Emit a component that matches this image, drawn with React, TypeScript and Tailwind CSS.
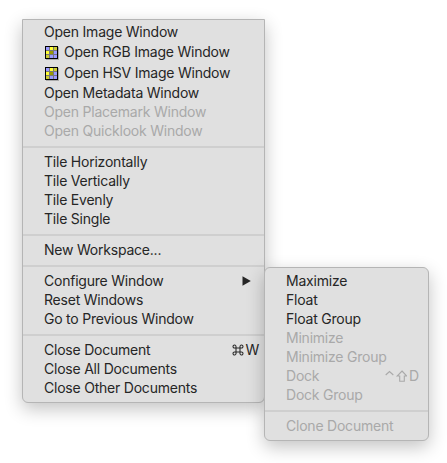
import React from "react";

type ItemProps = {
  label: string;
  disabled?: boolean;
  icon?: boolean;
  trailing?: React.ReactNode;
};

function GridIcon() {
  return (
    <svg className="mr-[4px] mt-[3px] h-4 w-4 shrink-0" viewBox="0 0 16 16" shapeRendering="crispEdges">
      <path d="M2 2h13v13H2z" fill="#aaa" />
      <path d="M1 1h13v13H1z" fill="#000" />
      <path d="M2 2h11v11H2z" fill="#77777a" />
      <path d="M2 2h3v3H2zM10 6h3v3h-3zM6 10h3v3H6zM10 10h3v3h-3z" fill="#9999ff" />
      <path d="M6 2h3v3H6zM2 6h3v3H2z" fill="#ffff33" />
      <path d="M10 2h3v3h-3zM2 10h3v3H2z" fill="#cccc33" />
      <path d="M6 6h3v3H6z" fill="#999900" />
    </svg>
  );
}

function Item({ label, disabled, icon, trailing }: ItemProps) {
  return (
    <div
      className={`flex items-center pl-[21px] ${icon ? "h-[21px] pb-[3px]" : "h-[19px] pb-[2px]"} ${
        disabled ? "text-[#a9a9a9]" : "text-[#262626]"
      }`}
    >
      {icon && <GridIcon />}
      <span>{label}</span>
      {trailing}
    </div>
  );
}

function Separator() {
  return (
    <div className="flex h-3 items-center">
      <div className="h-[2px] w-full bg-[#cfcfcf]" />
    </div>
  );
}

function CommandIcon() {
  return (
    <svg className="h-3 w-3" viewBox="0 0 12 12" fill="none" stroke="currentColor" strokeWidth="1.05">
      <path d="M4 4V2.6A1.5 1.5 0 1 0 2.5 4H9.5A1.5 1.5 0 1 0 8 2.6V9.4A1.5 1.5 0 1 0 9.5 8H2.5A1.5 1.5 0 1 0 4 9.4Z" />
    </svg>
  );
}

export default function App() {
  return (
    <div className="flex h-[463px] w-[447px] items-start overflow-hidden bg-white pl-[22px] pt-[19px] font-['Inter',sans-serif] text-[14px] leading-[19px] tracking-[-0.22px] whitespace-nowrap">
      <div className="h-[384px] w-[243px] shrink-0 rounded-b-[6px] border border-[#b5b5b5] bg-[#e0e0e0] pt-[3px] shadow-[0_6px_18px_rgba(0,0,0,0.24)]">
        <Item label="Open Image Window" />
        <Item label="Open RGB Image Window" icon />
        <Item label="Open HSV Image Window" icon />
        <Item label="Open Metadata Window" />
        <Item label="Open Placemark Window" disabled />
        <Item label="Open Quicklook Window" disabled />
        <Separator />
        <Item label="Tile Horizontally" />
        <Item label="Tile Vertically" />
        <Item label="Tile Evenly" />
        <Item label="Tile Single" />
        <Separator />
        <Item label="New Workspace..." />
        <Separator />
        <Item
          label="Configure Window"
          trailing={
            <svg className="mr-[13px] ml-auto h-[10px] w-[9px]" viewBox="0 0 9 10">
              <path d="M0.5 0.3L8.8 5L0.5 9.7Z" fill="currentColor" />
            </svg>
          }
        />
        <Item label="Reset Windows" />
        <Item label="Go to Previous Window" />
        <Separator />
        <Item
          label="Close Document"
          trailing={
            <span className="mr-[5px] ml-auto flex items-center gap-px">
              <CommandIcon />
              <span>W</span>
            </span>
          }
        />
        <Item label="Close All Documents" />
        <Item label="Close Other Documents" />
      </div>
      <div className="z-10 mt-[248px] -ml-px h-[174px] w-[165px] shrink-0 rounded-[6px] border border-[#b5b5b5] bg-[#e0e0e0] pt-[4px] shadow-[0_6px_18px_rgba(0,0,0,0.24)]">
        <Item label="Maximize" />
        <Item label="Float" />
        <Item label="Float Group" />
        <Item label="Minimize" disabled />
        <Item label="Minimize Group" disabled />
        <Item
          label="Dock"
          disabled
          trailing={
            <span className="mr-[9px] ml-auto flex items-center">
              <svg className="mr-[2px] h-3 w-[22px]" viewBox="0 0 22 12" fill="none" stroke="currentColor" strokeWidth="1.1">
                <path d="M0.7 5L4.5 1.5L8.3 5" />
                <path d="M17 1L21.8 6H19.3V11.3H14.7V6H12.2Z" />
              </svg>
              <span>D</span>
            </span>
          }
        />
        <Item label="Dock Group" disabled />
        <Separator />
        <Item label="Clone Document" disabled />
      </div>
    </div>
  );
}
